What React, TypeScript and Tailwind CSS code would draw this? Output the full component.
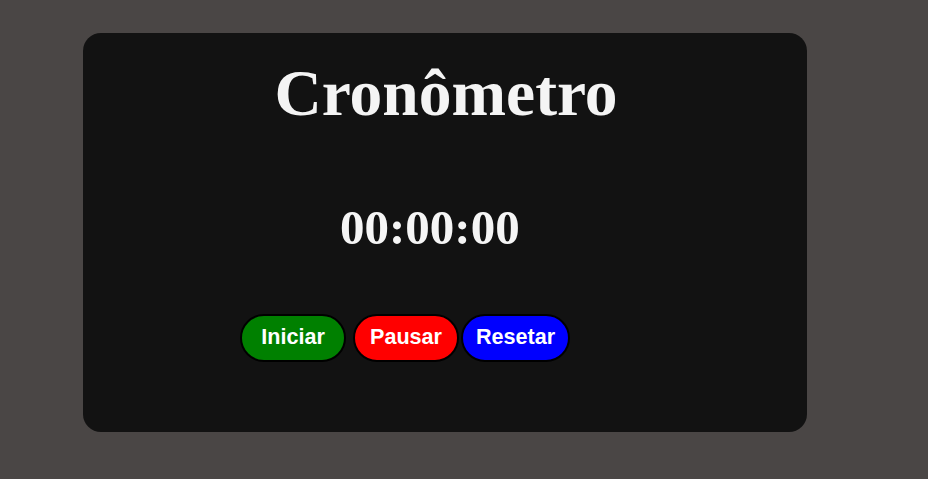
import React from "react";

const App = () => {
  return (
    <div className="min-h-screen w-full bg-[#4a4645] pt-[33px] pl-[83px]">
      <div className="flex w-[724px] h-[399px] flex-col items-start rounded-[18px] bg-[#121212] pt-[28px]">
        <h1 className="w-full pl-[2px] text-center text-[65.5px] leading-none font-bold text-[#f4f4f4] font-['Liberation_Serif',serif]">
          Cronômetro
        </h1>
        <div className="ml-[257px] mt-[76px] text-[49px] leading-none font-bold text-[#f5f5f5] font-['Liberation_Serif',serif]">
          00:00:00
        </div>
        <div className="ml-[157px] mt-[62px] flex items-center font-['Liberation_Sans',Arial,sans-serif] text-[21.6px] font-bold text-white">
          <button className="flex h-[48px] min-w-[106px] items-center justify-center rounded-full border-2 border-black bg-[#008000] px-[13px]">
            Iniciar
          </button>
          <button className="ml-[7px] flex h-[48px] min-w-[106px] items-center justify-center rounded-full border-2 border-black bg-[#ff0000] px-[13px]">
            Pausar
          </button>
          <button className="ml-[2px] flex h-[48px] min-w-[106px] items-center justify-center rounded-full border-2 border-black bg-[#0000ff] px-[13px]">
            Resetar
          </button>
        </div>
      </div>
    </div>
  );
};

export default App;
